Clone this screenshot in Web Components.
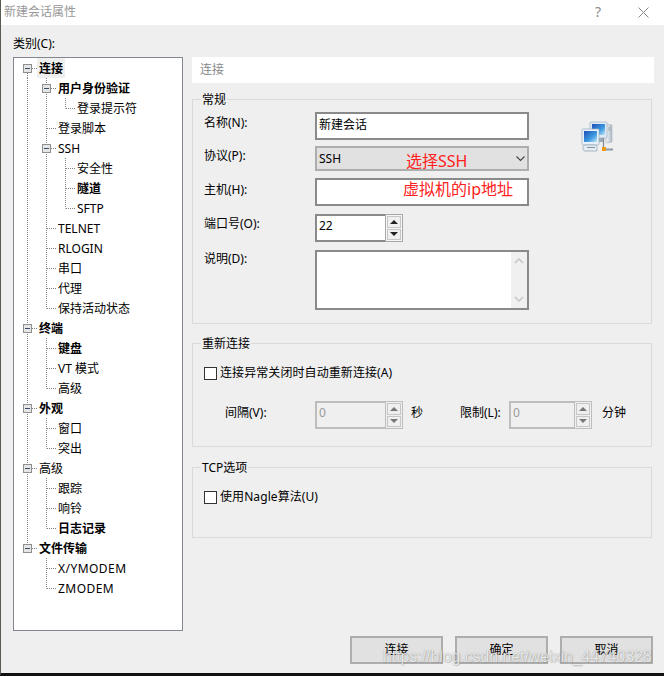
<!DOCTYPE html>
<html lang="zh-CN">
<head>
<meta charset="utf-8">
<title>新建会话属性</title>
<style>
  html, body { margin: 0; padding: 0; background: #efefef; }
  body { font: 12px/18px "Noto Sans", "Noto Sans CJK SC", sans-serif; color: #000; }
</style>
</head>
<body>
<session-dialog></session-dialog>

<template id="session-dialog-tpl">
  <style>
    :host { display: block; width: 664px; height: 676px; box-sizing: border-box; position: relative; overflow: hidden;
      background: #efefef; border-left: 1px solid #5a5a52; border-bottom: 3px solid #111; }
    * { box-sizing: border-box; }
    .title { display: flex; align-items: center; height: 25px; background: #fff; color: #999; padding: 0 0 2px 3px; }
    .title span { flex: 1; }
    .title svg { display: block; margin-top: 2px; }
    .help { width: 14px; margin-right: 33px; color: #8a8a8a; font-size: 14px; text-align: center; flex: none !important; }
    .close { margin-right: 15px; }
    .main { display: grid; grid-template-columns: 170px 462px; column-gap: 9px; padding: 9px 0 0 12px; }
    .cat { height: 23px; line-height: 20px; }
    .right { padding-top: 23px; }
    .head { height: 26px; background: #fff; color: #888; line-height: 25px; padding-left: 8px; margin-bottom: 7px; }
    group-box { margin: 0 2px 10px 0; }
    .form { display: grid; grid-template-columns: 111px 214px auto; align-items: start; }
    .form > span { line-height: 20px; height: 18px; }
    .icon { grid-column: 3; grid-row: 1 / span 5; margin: 8px 0 0 52px; }
    .limits { display: flex; align-items: flex-start; margin-top: 19px; }
    .limits span { line-height: 20px; height: 18px; margin-top: 2px; }
    .foot { display: flex; justify-content: flex-end; gap: 12px; padding: 5px 11px 0 0; }
    .mark { position: absolute; left: 382px; top: 646px; font: 15.8px/22px "Liberation Sans", sans-serif; white-space: nowrap;
      color: rgba(255,255,255,.78); text-shadow: 0 0 1px rgba(90,90,90,.6), 1px 1px 1px rgba(140,140,140,.35); }
    .note { color: #ff2020; font-size: 16px; }
    .wide { letter-spacing: .45px; }
  </style>
  <div class="title">
    <span>新建会话属性</span>
    <span class="help">?</span>
    <svg class="close" width="11" height="11" viewBox="0 0 11 11"><path d="M.5.5l10 10M10.5.5l-10 10" stroke="#8a8a8a" fill="none"/></svg>
  </div>
  <div class="main">
    <div>
      <div class="cat">类别(C):</div>
      <category-tree>
        <tree-row guides="R" box bold selected>连接</tree-row>
        <tree-row guides="|T" box bold>用户身份验证</tree-row>
        <tree-row guides="||L">登录提示符</tree-row>
        <tree-row guides="|T">登录脚本</tree-row>
        <tree-row guides="|T" box>SSH</tree-row>
        <tree-row guides="||T">安全性</tree-row>
        <tree-row guides="||T" bold>隧道</tree-row>
        <tree-row guides="||L">SFTP</tree-row>
        <tree-row guides="|T">TELNET</tree-row>
        <tree-row guides="|T">RLOGIN</tree-row>
        <tree-row guides="|T">串口</tree-row>
        <tree-row guides="|T">代理</tree-row>
        <tree-row guides="|L">保持活动状态</tree-row>
        <tree-row guides="T" box bold>终端</tree-row>
        <tree-row guides="|T" bold>键盘</tree-row>
        <tree-row guides="|T">VT 模式</tree-row>
        <tree-row guides="|L">高级</tree-row>
        <tree-row guides="T" box bold>外观</tree-row>
        <tree-row guides="|T">窗口</tree-row>
        <tree-row guides="|L">突出</tree-row>
        <tree-row guides="T" box>高级</tree-row>
        <tree-row guides="|T">跟踪</tree-row>
        <tree-row guides="|T">响铃</tree-row>
        <tree-row guides="|L" bold>日志记录</tree-row>
        <tree-row guides="L" box bold>文件传输</tree-row>
        <tree-row guides=" T"><span class="wide">X/YMODEM</span></tree-row>
        <tree-row guides=" L"><span class="wide">ZMODEM</span></tree-row>
      </category-tree>
    </div>
    <div class="right">
      <div class="head">连接</div>
      <group-box label="常规" style="height:234px">
        <div class="form" style="padding-top:4px">
          <span style="margin-top:1px">名称(N):</span>
          <text-field style="height:28px;padding-top:1px">新建会话</text-field>
          <net-icon class="icon"></net-icon>
          <span style="grid-column:1;margin-top:6px">协议(P):</span>
          <combo-box style="grid-column:2;margin-top:6px">SSH<span class="note" slot="note">选择SSH</span></combo-box>
          <span style="grid-column:1;margin-top:9px">主机(H):</span>
          <text-field style="grid-column:2;margin-top:7px;height:28px;padding-left:86px;line-height:14px"><span class="note">虚拟机的ip地址</span></text-field>
          <span style="grid-column:1;margin-top:8px">端口号(O):</span>
          <spin-box style="grid-column:2;margin-top:8px" value="22"></spin-box>
          <span style="grid-column:1;margin-top:7px">说明(D):</span>
          <text-field scroll style="grid-column:2;margin-top:8px;height:60px"></text-field>
        </div>
      </group-box>
      <group-box label="重新连接" style="height:113px;margin-bottom:11px">
        <div style="padding-top:12px"><check-box>连接异常关闭时自动重新连接(A)</check-box></div>
        <div class="limits">
          <span style="width:111px;padding-left:21px">间隔(V):</span>
          <spin-box disabled value="0"></spin-box>
          <span style="margin-left:8px;width:49px">秒</span>
          <span style="width:49px">限制(L):</span>
          <spin-box disabled value="0" style="width:83px"></spin-box>
          <span style="margin-left:10px">分钟</span>
        </div>
      </group-box>
      <group-box label="TCP选项" style="height:80px;margin-bottom:0">
        <div style="padding-top:12px"><check-box>使用Nagle算法(U)</check-box></div>
      </group-box>
    </div>
  </div>
  <div class="foot">
    <push-button>连接</push-button>
    <push-button>确定</push-button>
    <push-button>取消</push-button>
  </div>
  <div class="mark">https://blog.csdn.net/weixin_44740328</div>
</template>

<script>
  // small helper, every element below does the same thing in its constructor
  class Base extends HTMLElement {
    mount(html) {
      this.attachShadow({ mode: 'open' }).innerHTML = html;
    }
  }

  class SessionDialog extends Base {
    constructor() {
      super();
      this.attachShadow({ mode: 'open' });
      this.shadowRoot.appendChild(document.getElementById('session-dialog-tpl').content.cloneNode(true));
    }
  }

  class CategoryTree extends Base {
    constructor() {
      super();
      this.mount(`<style>
        :host { display: block; width: 170px; height: 574px; box-sizing: border-box; background: #fff;
          border: 1px solid #828790; padding-left: 4px; }
      </style><slot></slot>`);
    }
  }

  const DOTS = 'stroke="#808080" stroke-dasharray="1 1" fill="none"';
  const GUIDES = {
    ' ': '',
    '|': `<path d="M9.5 0v20" ${DOTS}/>`,
    'T': `<path d="M9.5 0v20M10 10.5h9" ${DOTS}/>`,
    'L': `<path d="M9.5 0v10.5M10 10.5h9" ${DOTS}/>`,
    'R': `<path d="M9.5 11v9M10 10.5h9" ${DOTS}/>`
  };
  const BOX = `<rect x="5.5" y="6.5" width="8" height="8" fill="#e6e6e6" stroke="#8f8f8f"/>
    <path d="M7 10.5h5" stroke="#3b4a6b"/>`;

  class TreeRow extends Base {
    constructor() {
      super();
      this.mount(`<style>
        :host { display: flex; height: 20px; white-space: nowrap; }
        svg { display: block; flex: none; }
        .txt { padding: 0 2px; line-height: 22px; height: 20px; }
        :host([bold]) .txt { font-weight: 700; }
        :host([selected]) .txt { background: #efefef; }
      </style><span id="g" style="display:flex"></span><span class="txt"><slot></slot></span>`);
    }
    connectedCallback() {
      const list = (this.getAttribute('guides') || '').split('');
      const hasBox = this.hasAttribute('box');
      this.shadowRoot.getElementById('g').innerHTML = list.map((c, i) =>
        `<svg width="19" height="20" viewBox="0 0 19 20">${GUIDES[c]}${hasBox && i === list.length - 1 ? BOX : ''}</svg>`
      ).join('');
    }
  }

  class GroupBox extends Base {
    constructor() {
      super();
      this.mount(`<style>
        :host { display: block; box-sizing: border-box; }
        fieldset { box-sizing: border-box; height: 100%; margin: 0; padding: 0 0 0 11px; border: 1px solid #dadada; }
        legend { margin-left: -3px; padding: 0 1px; height: 18px; line-height: 20px; }
      </style><fieldset><legend id="l"></legend><slot></slot></fieldset>`);
    }
    connectedCallback() {
      this.shadowRoot.getElementById('l').textContent = this.getAttribute('label');
    }
  }

  class TextField extends Base {
    constructor() {
      super();
      this.mount(`<style>
        :host { display: block; box-sizing: border-box; position: relative; background: #fff; border: 2px solid #8a8a8a;
          line-height: 20px; padding: 2px; }
        .bar { display: none; position: absolute; top: 0; right: 0; bottom: 0; width: 16px; background: #f0f0f0; }
        :host([scroll]) .bar { display: flex; flex-direction: column; justify-content: space-between; padding: 5px 3px 5px; box-sizing: border-box; }
        svg { display: block; }
      </style><slot></slot><div class="bar">
        <svg width="10" height="7" viewBox="0 0 10 7"><path d="M1 6l4-4 4 4" fill="none" stroke="#c8c8c8" stroke-width="1.6"/></svg>
        <svg width="10" height="7" viewBox="0 0 10 7"><path d="M1 1l4 4 4-4" fill="none" stroke="#c8c8c8" stroke-width="1.6"/></svg>
      </div>`);
    }
  }

  class ComboBox extends Base {
    constructor() {
      super();
      this.mount(`<style>
        :host { display: flex; align-items: center; box-sizing: border-box; height: 25px; background: #e1e1e1;
          border: 2px solid #adadad; padding: 0 2px 0 2px; }
        .val { width: 87px; }
        .note { flex: 1; padding-top: 6px; line-height: 18px; }
        svg { display: block; }
      </style><span class="val"><slot></slot></span><span class="note"><slot name="note"></slot></span>
      <svg width="9" height="6" viewBox="0 0 9 6"><path d="M.5.5L4.5 4.5 8.5.5" fill="none" stroke="#444" stroke-width="1.1"/></svg>`);
    }
  }

  class SpinBox extends Base {
    constructor() {
      super();
      this.mount(`<style>
        :host { display: flex; box-sizing: border-box; width: 88px; height: 28px; }
        .val { flex: 1; background: #fff; border: 2px solid #8a8a8a; border-right: 0; padding-left: 2px; line-height: 20px; }
        .btns { display: flex; flex-direction: column; gap: 1px; width: 18px; box-sizing: border-box; padding: 1px; background: #f5f5f5; border: 1px solid #a8a8a8; }
        .btns i { flex: 1; display: flex; align-items: center; justify-content: center; background: #efefef; border: 1px solid #c6c6c6; }
        .btns b { width: 0; height: 0; border: 4px solid transparent; }
        .up b { border-top: 0; border-bottom-color: #222; }
        .dn b { border-bottom: 0; border-top-color: #222; }
        :host([disabled]) .val { background: #efefef; border-color: #bdbdbd; color: #9a9a9a; }
        :host([disabled]) .btns { background: #efefef; border-color: #bdbdbd; }
        :host([disabled]) .up b { border-bottom-color: #777; }
        :host([disabled]) .dn b { border-top-color: #777; }
      </style><div class="val" id="v"></div><div class="btns"><i class="up"><b></b></i><i class="dn"><b></b></i></div>`);
    }
    connectedCallback() {
      this.shadowRoot.getElementById('v').textContent = this.getAttribute('value');
    }
  }

  class CheckBox extends Base {
    constructor() {
      super();
      this.mount(`<style>
        :host { display: flex; align-items: center; gap: 3px; line-height: 18px; letter-spacing: .08px; }
        i { display: block; width: 13px; height: 13px; box-sizing: border-box; border: 1px solid #333; background: #fff; }
      </style><i></i><slot></slot>`);
    }
  }

  class PushButton extends Base {
    constructor() {
      super();
      this.mount(`<style>
        :host { display: flex; align-items: center; justify-content: center; box-sizing: border-box; width: 93px; height: 28px;
          background: #e1e1e1; border: 2px solid #adadad; }
      </style><slot></slot>`);
    }
  }

  class NetIcon extends Base {
    constructor() {
      super();
      this.mount(`<style>:host { display: block; width: 33px; height: 34px; } svg { display: block; }</style>
      <svg width="33" height="34" viewBox="0 0 33 34">
        <defs>
          <linearGradient id="scr" x1="0" y1="0" x2="1" y2="1"><stop offset="0" stop-color="#1d4fb8"/><stop offset=".6" stop-color="#3f9be0"/><stop offset="1" stop-color="#c4e6f6"/></linearGradient>
          <linearGradient id="case" x1="0" y1="0" x2="1" y2="0"><stop offset="0" stop-color="#f4f8fb"/><stop offset="1" stop-color="#aab8c4"/></linearGradient>
        </defs>
        <path d="M25 4l6 1v17l-6 1z" fill="url(#case)" stroke="#a9b6c0" stroke-width=".6"/>
        <path d="M27 8h3M27 10h3" stroke="#8d9ba8" stroke-width=".7"/>
        <rect x="9" y="2" width="17" height="16" rx="1" fill="#dfeaf3" stroke="#9fb3c4" stroke-width=".7"/>
        <rect x="11" y="4" width="13" height="11" fill="url(#scr)"/>
        <path d="M14 18h9v4h-9z" fill="#9daab6"/>
        <rect x="1" y="9" width="17" height="16" rx="1" fill="#e8f1f8" stroke="#97adc0" stroke-width=".7"/>
        <rect x="3" y="11" width="13" height="11" fill="url(#scr)"/>
        <path d="M4 25h10c2 0 2 2 2 3v3H4c-2 0-2-2-2-3s0-3 2-3z" fill="#e5ecf2" stroke="#8fa1b1" stroke-width=".7"/>
        <path d="M6 27.5h8" stroke="#7f93a5"/>
        <path d="M22.5 18v9" stroke="#7d8a96" stroke-width="1.2"/>
        <path d="M25 29.5h7" stroke="#8a9aa8" stroke-width="2"/>
        <rect x="21" y="27" width="4" height="4" fill="#ef9a17"/>
      </svg>`);
    }
  }

  customElements.define('session-dialog', SessionDialog);
  customElements.define('category-tree', CategoryTree);
  customElements.define('tree-row', TreeRow);
  customElements.define('group-box', GroupBox);
  customElements.define('text-field', TextField);
  customElements.define('combo-box', ComboBox);
  customElements.define('spin-box', SpinBox);
  customElements.define('check-box', CheckBox);
  customElements.define('push-button', PushButton);
  customElements.define('net-icon', NetIcon);
</script>
</body>
</html>
